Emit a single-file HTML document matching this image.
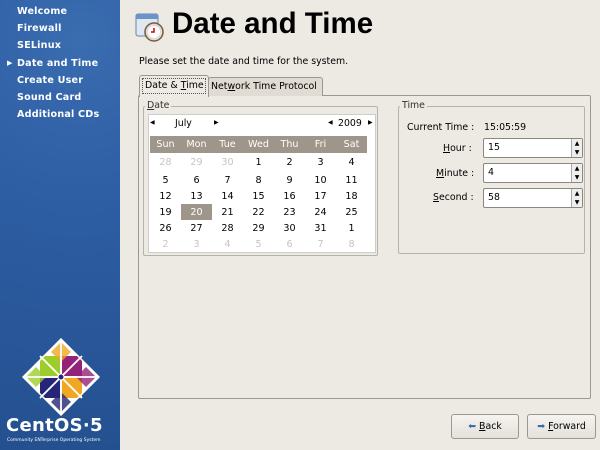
<!DOCTYPE html>
<html><head><style>
body{margin:0;width:600px;height:450px;background:#ede9e3;font-family:"DejaVu Sans","Liberation Sans",sans-serif;font-size:9.4px;color:#000;position:relative;overflow:hidden}
.a{position:absolute;white-space:nowrap}
#side{left:0;top:0;width:120px;height:450px;background:radial-gradient(circle at 80px 40px,#3a6cb0 0,#2d5da3 40%,#24508f 100%)}
.nav{left:17px;color:#fff;font-weight:bold;font-size:9.6px;letter-spacing:.2px}
.frame{border:1px solid #b8b3aa;border-radius:2px}
.lg{background:#ede9e3;padding:0 2px;color:#333}
table{border-collapse:collapse;font-size:9.6px}
td{width:31px;text-align:center;height:16px;padding:0}
.g{color:#c8c4be}
.spin{width:98px;height:18px;border:1px solid #8c877e;background:#fff;border-radius:2px}
.spin span{position:absolute;left:4px;top:3px}
.spin i{position:absolute;right:0;top:0;width:10px;height:18px;border-left:1px solid #aaa;background:#eee;font-style:normal;font-size:6px;line-height:9px;text-align:center}
.btn{height:23px;border:1px solid #9c978f;border-radius:3px;background:linear-gradient(#f6f4f1,#e4e0da);line-height:23px;text-align:center}
</style></head><body>
<div id="side" class="a"></div>
<div class="a nav" style="top:6px">Welcome</div>
<div class="a nav" style="top:23px">Firewall</div>
<div class="a nav" style="top:40px">SELinux</div>
<div class="a nav" style="top:58px"><span style="position:absolute;left:-10px;font-size:7px;top:1px">▶</span>Date and Time</div>
<div class="a nav" style="top:75px">Create User</div>
<div class="a nav" style="top:92px">Sound Card</div>
<div class="a nav" style="top:109px">Additional CDs</div>
<svg class="a" style="left:22px;top:338px" width="78" height="78" viewBox="0 0 78 78">
<polygon points="39,1 77,39 39,77 1,39" fill="#fff"/>
<rect x="18" y="18" width="20" height="20" fill="#9ccd2a"/>
<rect x="40" y="18" width="20" height="20" fill="#932279"/>
<rect x="18" y="40" width="20" height="20" fill="#262577"/>
<rect x="40" y="40" width="20" height="20" fill="#efa724"/>
<polygon points="39,4 49,14 39,24 29,14" fill="#efa724" opacity=".8"/>
<polygon points="74,39 64,49 54,39 64,29" fill="#932279" opacity=".8"/>
<polygon points="39,74 29,64 39,54 49,64" fill="#262577" opacity=".8"/>
<polygon points="4,39 14,29 24,39 14,49" fill="#9ccd2a" opacity=".8"/>
<path d="M39 4V74M4 39H74M18 18L60 60M60 18L18 60" stroke="#fff" stroke-width="1.8"/>
<polygon points="39,1 77,39 39,77 1,39" fill="none" stroke="#fff" stroke-width="1.5"/>
<circle cx="39" cy="39" r="3" fill="#262577" stroke="#fff"/>
</svg>
<div class="a" style="left:6px;top:415px;color:#fff;font-weight:bold;font-size:18px;letter-spacing:.3px">CentOS·5</div>
<div class="a" style="left:7px;top:438px;color:#fff;font-size:4.5px">Community ENTerprise Operating System</div>

<svg class="a" style="left:134px;top:10px" width="32" height="32" viewBox="0 0 32 32">
<rect x="2" y="4" width="22" height="22" rx="2" fill="#dfe7f0" stroke="#6b85a8"/>
<rect x="2" y="4" width="22" height="5" fill="#6b94c8"/>
<circle cx="20" cy="22" r="9" fill="#ddd" stroke="#7a5a3a" stroke-width="1.5"/>
<circle cx="20" cy="22" r="6" fill="#fff"/>
<path d="M20 18v4h-3" stroke="#c00" stroke-width="1.5" fill="none"/>
</svg>
<div class="a" style="left:172px;top:7px;font-size:29.5px;font-weight:bold;font-family:'Liberation Sans',sans-serif">Date and Time</div>
<div class="a" style="left:139px;top:56px">Please set the date and time for the system.</div>

<div class="a" style="left:138px;top:95px;width:451px;height:302px;border:1px solid #9c978f;border-radius:2px"></div>
<div class="a" style="left:208px;top:77px;width:111px;height:18px;border:1px solid #9c978f;border-bottom:none;background:#e0dbd3;border-radius:3px 3px 0 0;line-height:18px;padding-left:2px">Net<u>w</u>ork Time Protocol</div>
<div class="a" style="left:139px;top:75px;width:68px;height:21px;border:1px solid #9c978f;border-bottom:none;background:#ede9e3;border-radius:3px 3px 0 0"><div style="margin:2px;border:1px dotted #555;line-height:14px;padding:0 2px">Date &amp; <u>T</u>ime</div></div>

<div class="a frame" style="left:143px;top:106px;width:233px;height:148px"></div>
<div class="a lg" style="left:145px;top:100px"><u>D</u>ate</div>
<div class="a" style="left:148px;top:114px;width:226px;height:137px;background:#fff;border:1px solid #ccc"></div>
<div class="a" style="left:150px;top:119px;font-size:6px">◀</div>
<div class="a" style="left:175px;top:118px">July</div>
<div class="a" style="left:214px;top:119px;font-size:6px">▶</div>
<div class="a" style="left:328px;top:119px;font-size:6px">◀</div>
<div class="a" style="left:338px;top:118px">2009</div>
<div class="a" style="left:368px;top:119px;font-size:6px">▶</div>
<table class="a" style="left:150px;top:136px">
<tr style="background:#9e968a;color:#fff"><td style="height:17px">Sun</td><td>Mon</td><td>Tue</td><td>Wed</td><td>Thu</td><td>Fri</td><td>Sat</td></tr>
<tr><td class="g" style="height:19px">28</td><td class="g">29</td><td class="g">30</td><td>1</td><td>2</td><td>3</td><td>4</td></tr>
<tr><td>5</td><td>6</td><td>7</td><td>8</td><td>9</td><td>10</td><td>11</td></tr>
<tr><td>12</td><td>13</td><td>14</td><td>15</td><td>16</td><td>17</td><td>18</td></tr>
<tr><td>19</td><td style="background:#9e968a;color:#fff">20</td><td>21</td><td>22</td><td>23</td><td>24</td><td>25</td></tr>
<tr><td>26</td><td>27</td><td>28</td><td>29</td><td>30</td><td>31</td><td>1</td></tr>
<tr><td class="g">2</td><td class="g">3</td><td class="g">4</td><td class="g">5</td><td class="g">6</td><td class="g">7</td><td class="g">8</td></tr>
</table>

<div class="a frame" style="left:398px;top:106px;width:185px;height:146px"></div>
<div class="a lg" style="left:400px;top:100px">Time</div>
<div class="a" style="left:407px;top:122px">Current Time :</div>
<div class="a" style="left:484px;top:122px">15:05:59</div>
<div class="a" style="left:443px;top:143px"><u>H</u>our :</div>
<div class="a" style="left:436px;top:168px"><u>M</u>inute :</div>
<div class="a" style="left:433px;top:192px"><u>S</u>econd :</div>
<div class="a spin" style="left:483px;top:138px"><span>15</span><i>▲<br>▼</i></div>
<div class="a spin" style="left:483px;top:163px"><span>4</span><i>▲<br>▼</i></div>
<div class="a spin" style="left:483px;top:188px"><span>58</span><i>▲<br>▼</i></div>

<div class="a btn" style="left:451px;top:414px;width:66px"><span style="color:#3a6ea8">⬅</span> <u>B</u>ack</div>
<div class="a btn" style="left:527px;top:414px;width:67px"><span style="color:#3a6ea8">➡</span> <u>F</u>orward</div>
</body></html>
